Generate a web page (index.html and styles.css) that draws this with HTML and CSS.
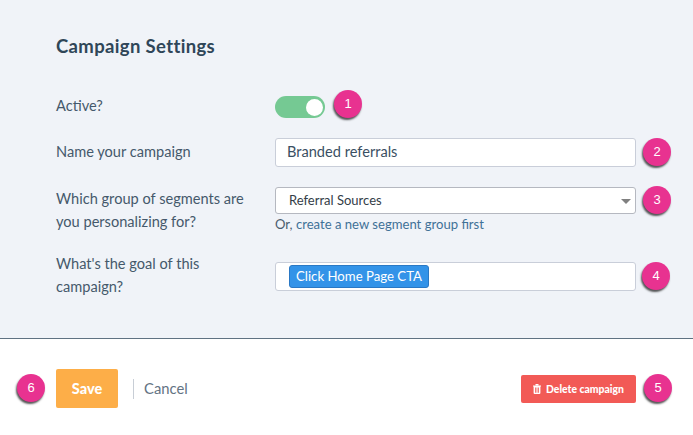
FILE: index.html
```html
<!DOCTYPE html>
<html lang="en">
<head>
    <meta charset="UTF-8">
    <title>Campaign Settings</title>
    <link rel="stylesheet" href="styles.css">
</head>
<body>

<div class="settings">
    <h1>Campaign Settings</h1>

    <div class="row row-active">
        <div class="label">Active?</div>
        <div class="toggle"><span class="knob"></span></div>
    </div>

    <div class="row row-name">
        <div class="label">Name your campaign</div>
        <div class="text-input">Branded referrals</div>
    </div>

    <div class="row row-group">
        <div class="label">Which group of segments are<br>you personalizing for?</div>
        <div>
            <div class="select">Referral Sources<span class="caret"></span></div>
            <div class="hint">Or, <a href="#">create a new segment group first</a></div>
        </div>
    </div>

    <div class="row row-goal">
        <div class="label">What's the goal of this<br>campaign?</div>
        <div class="tag-input"><span class="tag">Click Home Page CTA</span></div>
    </div>
</div>

<div class="footer">
    <button class="save">Save</button>
    <a class="cancel" href="#">Cancel</a>
    <button class="delete">
        <svg width="8" height="10" viewBox="0 0 8 10"><path d="M0 1.5h8v1H7.4V9a1 1 0 0 1-1 1H1.6a1 1 0 0 1-1-1V2.500H0zM2.500 0h3v1.200h-3zM2 3.500V8.800h.8V3.500zM3.600 3.500V8.800h.8V3.500zM5.200 3.500V8.800H6V3.500z" fill="#fff" fill-rule="evenodd"/></svg>
        Delete campaign
    </button>
</div>

<!-- numbered callouts on top of the form -->
<span class="badge b1">1</span>
<span class="badge b2">2</span>
<span class="badge b3">3</span>
<span class="badge b4">4</span>
<span class="badge b5">5</span>
<span class="badge b6">6</span>

</body>
</html>
```

FILE: styles.css
```css
* {
    box-sizing: border-box;
}

body {
    margin: 0;
    width: 693px;
    height: 435px;
    overflow: hidden;
    position: relative;
    background-color: white;
    font-family: "Lato", sans-serif;
    color: #34495e;
}

.settings {
    height: 339px;
    padding: 35px 57px 0 56px;
    background-color: #f0f3f8;
    border-bottom: 1px solid #5f7282;
}

h1 {
    margin: 0 0 39px;
    font-size: 18.5px;
    line-height: 22px;
    font-weight: 700;
    letter-spacing: 0.35px;
    color: #2f4658;
}

.row {
    display: grid;
    grid-template-columns: 219px 361px;
    align-items: start;
}

.label {
    font-size: 14.6px;
    line-height: 23px;
    color: #45596b;
}

.row-active {
    height: 22px;
    margin-bottom: 20px;
}

.row-active .label {
    line-height: 20px;
}

.row-name {
    margin-bottom: 20px;
}

.row-name .label {
    line-height: 28px;
}

.row-group {
    margin-bottom: 28px;
}

.row-goal .label {
    margin-top: -10px;
}

.toggle {
    width: 50px;
    height: 22px;
    border-radius: 11px;
    background-color: #75c993;
    display: flex;
    justify-content: flex-end;
    align-items: center;
    padding-right: 2px;
}

.knob {
    width: 17px;
    height: 17px;
    border-radius: 50%;
    background-color: white;
}

.text-input {
    height: 29px;
    padding-left: 11px;
    background-color: white;
    border: 1px solid #c9ced9;
    border-radius: 3px;
    font-size: 14.6px;
    line-height: 26px;
    color: #3a4f63;
}

.select {
    height: 27px;
    padding-left: 13px;
    background-color: white;
    border: 1px solid #b5b8c0;
    border-radius: 3px;
    font-size: 13px;
    line-height: 25px;
    color: #333d47;
    position: relative;
}

.caret {
    position: absolute;
    right: 4px;
    top: 11px;
    border-left: 5px solid transparent;
    border-right: 5px solid transparent;
    border-top: 5px solid #808080;
}

.hint {
    font-size: 13.1px;
    line-height: 20px;
    color: #4a5d6e;
}

.hint a {
    color: #3f7197;
    text-decoration: none;
}

.tag-input {
    height: 29px;
    padding: 2px 13px;
    background-color: white;
    border: 1px solid #c9ced9;
    border-radius: 3px;
}

.tag {
    display: inline-block;
    height: 23px;
    padding: 0 6px;
    background-color: #3393e8;
    border: 1px solid #2a78c4;
    border-radius: 3px;
    font-size: 13.2px;
    line-height: 20px;
    color: white;
}

.footer {
    height: 96px;
    padding: 30px 57px 0 56px;
    display: flex;
    align-items: flex-start;
}

button {
    border: none;
    border-radius: 2px;
    color: white;
    font-family: "Lato", sans-serif;
    font-weight: 900;
}

.save {
    width: 62px;
    height: 39px;
    padding: 0;
    background-color: #fdae48;
    font-size: 14.5px;
}

.cancel {
    margin: 10px 0 0 15px;
    padding-left: 10px;
    height: 20px;
    border-left: 1px solid #c8ced6;
    font-size: 14.8px;
    line-height: 19px;
    color: #637383;
    text-decoration: none;
}

.delete {
    margin: 6px 0 0 auto;
    width: 115px;
    height: 28px;
    padding: 0;
    background-color: #f25a56;
    font-size: 10.4px;
    display: flex;
    align-items: center;
    justify-content: center;
    gap: 5px;
}

.badge {
    position: absolute;
    width: 28px;
    height: 28px;
    border-radius: 50%;
    background-color: #e83290;
    box-shadow: -1px 2px 2px 0 rgba(30, 30, 30, 0.75);
    color: white;
    font-family: "Liberation Sans", sans-serif;
    font-size: 13px;
    line-height: 27px;
    text-align: center;
}

.b1 { left: 334px; top: 90px; }
.b2 { left: 643px; top: 138px; }
.b3 { left: 643px; top: 186px; }
.b4 { left: 642px; top: 262px; }
.b5 { left: 644px; top: 374px; }
.b6 { left: 17px; top: 374px; }
```
